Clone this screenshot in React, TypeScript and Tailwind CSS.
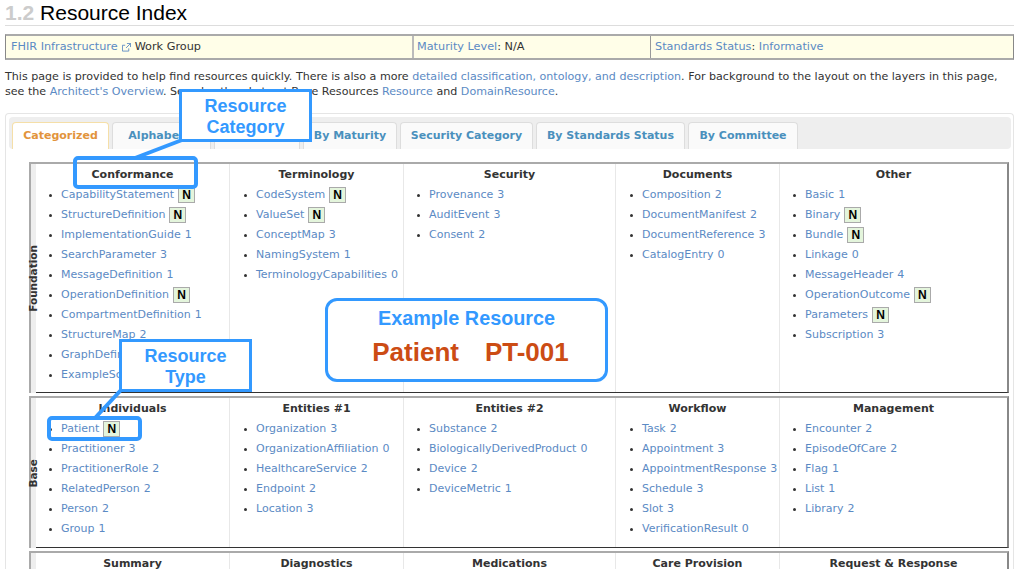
const cols = ['w-[194px]', 'w-[174px]', 'w-[212px]', 'w-[164px]', 'flex-1']
const pads = ['pl-[13px]', 'pl-[14px]', 'pl-[13px]', 'pl-[14px]', 'pl-[13px]']

type Item = { name: string; note: string }

const row = (s: string): Item[] =>
  s.split(',').map((x) => {
    const [name, note] = x.split(' ')
    return { name, note }
  })

const foundation = [
  { title: 'Conformance', items: row('CapabilityStatement N,StructureDefinition N,ImplementationGuide 1,SearchParameter 3,MessageDefinition 1,OperationDefinition N,CompartmentDefinition 1,StructureMap 2,GraphDefinition 1,ExampleScenario 0') },
  { title: 'Terminology', items: row('CodeSystem N,ValueSet N,ConceptMap 3,NamingSystem 1,TerminologyCapabilities 0') },
  { title: 'Security', items: row('Provenance 3,AuditEvent 3,Consent 2') },
  { title: 'Documents', items: row('Composition 2,DocumentManifest 2,DocumentReference 3,CatalogEntry 0') },
  { title: 'Other', items: row('Basic 1,Binary N,Bundle N,Linkage 0,MessageHeader 4,OperationOutcome N,Parameters N,Subscription 3') },
]

const base = [
  { title: 'Individuals', items: row('Patient N,Practitioner 3,PractitionerRole 2,RelatedPerson 2,Person 2,Group 1') },
  { title: 'Entities #1', items: row('Organization 3,OrganizationAffiliation 0,HealthcareService 2,Endpoint 2,Location 3') },
  { title: 'Entities #2', items: row('Substance 2,BiologicallyDerivedProduct 0,Device 2,DeviceMetric 1') },
  { title: 'Workflow', items: row('Task 2,Appointment 3,AppointmentResponse 3,Schedule 3,Slot 3,VerificationResult 0') },
  { title: 'Management', items: row('Encounter 2,EpisodeOfCare 2,Flag 1,List 1,Library 2') },
]

const clinical = ['Summary', 'Diagnostics', 'Medications', 'Care Provision', 'Request & Response'].map((title) => ({ title, items: [] as Item[] }))

const tabs = [
  { label: 'Alphabetic', w: 'w-[99px]' },
  { label: 'By Module', w: 'w-[86px]' },
  { label: 'By Maturity', w: 'w-[94px]' },
  { label: 'Security Category', w: 'w-[133px]' },
  { label: 'By Standards Status', w: 'w-[149px]' },
  { label: 'By Committee', w: 'w-[110px]' },
]

function Entry({ name, note }: Item) {
  return (
    <li className="flex h-[20px] items-center whitespace-nowrap text-[#5b8ac4]">
      <span className="mr-[9px] h-[3px] w-[3px] shrink-0 rounded-full bg-[#333]" />
      <span>{name}</span>
      {note === 'N' ? (
        <span className="ml-[4px] flex h-[16px] w-[17px] items-center justify-center border border-[#aaa] bg-[#e4f5dc] font-['Liberation_Sans',sans-serif] text-[12px] font-bold text-black">
          N
        </span>
      ) : (
        <span className="ml-[4px]">{note}</span>
      )}
    </li>
  )
}

function Band({ label, groups, h }: { label: string; groups: typeof base; h: string }) {
  return (
    <div className={`flex ${h}`}>
      <div className="flex w-[7px] shrink-0 items-center justify-center border-l-2 border-t-2 border-[#aaa] bg-[#eee]">
        <span className="whitespace-nowrap text-[10.500px] font-bold text-[#333] [writing-mode:vertical-rl] rotate-180">{label}</span>
      </div>
      <div className="flex flex-1 border-b border-r-2 border-t-2 border-b-[#333] border-r-[#888] border-t-[#aaa] text-[11px]">
        {groups.map((g, i) => (
          <div key={g.title} className={`${cols[i]} ${i < 4 ? 'shrink-0 border-r border-[#e8e8e8]' : ''}`}>
            <div className="pt-[3px] text-center font-bold leading-[16px] text-[#333]">{g.title}</div>
            <ul className={`mt-[2px] ${pads[i]}`}>
              {g.items.map((it) => (
                <Entry key={it.name} {...it} />
              ))}
            </ul>
          </div>
        ))}
      </div>
    </div>
  )
}

function Callout({ className, lines }: { className: string; lines: string[] }) {
  return (
    <div className={`absolute flex flex-col items-center justify-center border-[3px] border-[#3399ff] bg-white pt-[2px] font-['Liberation_Sans',sans-serif] text-[18px] font-bold leading-[21px] text-[#3399ff] ${className}`}>
      {lines.map((l) => (
        <span key={l}>{l}</span>
      ))}
    </div>
  )
}

export default function App() {
  return (
    <div className="relative h-[569px] w-[1027px] overflow-hidden bg-white font-['DejaVu_Sans',sans-serif] text-[11.1px] text-[#333]">
      <div className="ml-[5px] w-[1009px]">
        <h1 className="h-[26px] border-b border-[#ddd] font-['Liberation_Sans',sans-serif] text-[21px] leading-[25px] text-black">
          <span className="font-bold text-[#ccc]">1.2</span> Resource Index
        </h1>

        <div className="mt-[8px] flex h-[26px] items-center border-x border-y-2 border-x-[#888] border-y-[#aaa] bg-[#fffee8] text-[11.25px] leading-[22px]">
          <div className="w-[408px] shrink-0 border-r-2 border-[#bbb] pl-[5px]">
            <span className="text-[#5b8ac4]">FHIR Infrastructure</span>
            <svg className="mx-[4px] inline h-[9px] w-[9px] text-[#5b8ac4]" viewBox="0 0 10 10" fill="none" stroke="currentColor">
              <path d="M7.5 6v3h-7V2.500h3M5.500.500h4v4M9.500.500l-5 5" />
            </svg>
            Work Group
          </div>
          <div className="w-[237px] shrink-0 border-r border-[#999] pl-[3px]">
            <span className="text-[#5b8ac4]">Maturity Level</span>: N/A
          </div>
          <div className="pl-[4px]">
            <span className="text-[#5b8ac4]">Standards Status</span>: <span className="text-[#5b8ac4]">Informative</span>
          </div>
        </div>

        <p className="mt-[9px] leading-[15px]">
          This page is provided to help find resources quickly. There is also a more{' '}
          <span className="text-[#5b8ac4]">detailed classification, ontology, and description</span>. For background to the layout on the layers in this page,
          <br />
          see the <span className="text-[#5b8ac4]">Architect's Overview</span>. See also the abstract Base Resources <span className="text-[#5b8ac4]">Resource</span> and{' '}
          <span className="text-[#5b8ac4]">DomainResource</span>.
        </p>

        <div className="mt-[14px] h-[600px] rounded-t border border-b-0 border-[#e5e5e5] pl-[3px] pr-[2px] pt-[3px]">
          <div className="flex h-[32px] items-end gap-[3px] rounded bg-[#eee] pl-[3px] text-[11px]">
            <div className="flex h-[27px] w-[97px] items-center justify-center rounded-t border border-b-0 border-[#f5dfa8] bg-white font-bold text-[#e2943c]">Categorized</div>
            {tabs.map((t) => (
              <div key={t.label} className={`flex h-[27px] items-center justify-center whitespace-nowrap rounded-t border border-b-0 border-[#ddd] bg-[#fafafa] font-bold text-[#4a90bd] ${t.w}`}>
                {t.label}
              </div>
            ))}
          </div>
          <div className="ml-[20px] mr-[2px] mt-[13px] flex flex-col gap-[3px]">
            <Band label="Foundation" groups={foundation} h="h-[231px]" />
            <Band label="Base" groups={base} h="h-[152px]" />
            <Band label="Clinical" groups={clinical} h="h-[200px]" />
          </div>
        </div>
      </div>

      <svg className="absolute left-0 top-0 h-[569px] w-[1027px]" viewBox="0 0 1027 569" fill="none" stroke="#3399ff" strokeWidth="4">
        <path d="M182 140 135 158" />
        <path d="M121 390 95 418" />
      </svg>
      <Callout className="left-[179px] top-[89px] h-[53px] w-[133px]" lines={['Resource', 'Category']} />
      <Callout className="left-[119px] top-[339px] h-[53px] w-[133px]" lines={['Resource', 'Type']} />
      <div className="absolute left-[73px] top-[156px] h-[33px] w-[125px] rounded-[5px] border-4 border-[#3399ff]" />
      <div className="absolute left-[47px] top-[416px] h-[25px] w-[95px] rounded-[5px] border-4 border-[#3399ff]" />
      <div className="absolute left-[325px] top-[298px] flex h-[84px] w-[283px] flex-col items-center rounded-[12px] border-[3px] border-[#3399ff] bg-white font-['Liberation_Sans',sans-serif] font-bold">
        <span className="mt-[5px] text-[19.8px] leading-[24px] text-[#3399ff]">Example Resource</span>
        <span className="ml-[8px] mt-[7px] flex gap-[26px] text-[26px] leading-[30px] text-[#cc4c14]">
          <span>Patient</span>
          <span>PT-001</span>
        </span>
      </div>
    </div>
  )
}
